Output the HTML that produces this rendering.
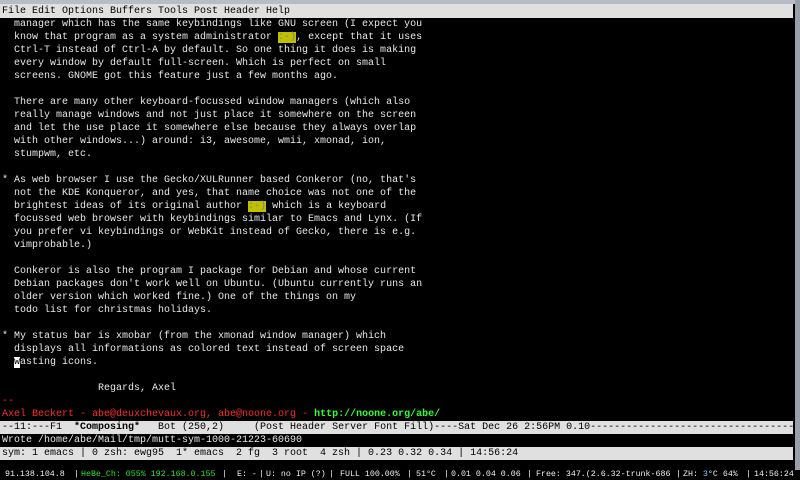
<!DOCTYPE html>
<html><head><meta charset="utf-8"><style>
html,body{margin:0;padding:0;}
body{width:800px;height:480px;background:#000;position:relative;overflow:hidden;font-family:"Liberation Mono",monospace;}
#top{position:absolute;left:0;top:0;width:800px;height:4px;background:#b8bcc4;}
#right{position:absolute;left:795px;top:0;width:5px;height:470px;background:#9a9ea6;}
.row{position:absolute;left:2px;height:13px;line-height:13px;font-size:10px;white-space:pre;color:#e8e8e8;}
#menu{position:absolute;left:0;top:4px;width:793px;height:14px;background:#e0e0e0;}
#menu .row{color:#000;top:1px;}
.hl{background:#c0c000;color:#808080;}
.cur{background:#fff;color:#000;}
.red{color:#ff2a2a;}
.grn{color:#30ff30;font-weight:bold;}
.bar{position:absolute;left:0;width:793px;height:13px;background:#e0e0e0;overflow:hidden;}
#xm{position:absolute;left:0;top:470px;width:800px;height:10px;background:#000;}
#xm span{position:absolute;top:0;line-height:10px;font-size:8.3px;color:#eee;white-space:pre;}
#xm .g{color:#30e030;}
</style></head><body>
<div id="top"></div>
<div id="right"></div>
<div id="menu"><div class="row">File Edit Options Buffers Tools Post Header Help</div></div>
<div class="row" style="top:18px">  manager which has the same keybindings like GNU screen (I expect you</div>
<div class="row" style="top:31px">  know that program as a system administrator <span class="hl">:-)</span>, except that it uses</div>
<div class="row" style="top:44px">  Ctrl-T instead of Ctrl-A by default. So one thing it does is making</div>
<div class="row" style="top:57px">  every window by default full-screen. Which is perfect on small</div>
<div class="row" style="top:70px">  screens. GNOME got this feature just a few months ago.</div>
<div class="row" style="top:96px">  There are many other keyboard-focussed window managers (which also</div>
<div class="row" style="top:109px">  really manage windows and not just place it somewhere on the screen</div>
<div class="row" style="top:122px">  and let the use place it somewhere else because they always overlap</div>
<div class="row" style="top:135px">  with other windows...) around: i3, awesome, wmii, xmonad, ion,</div>
<div class="row" style="top:148px">  stumpwm, etc.</div>
<div class="row" style="top:174px">* As web browser I use the Gecko/XULRunner based Conkeror (no, that's</div>
<div class="row" style="top:187px">  not the KDE Konqueror, and yes, that name choice was not one of the</div>
<div class="row" style="top:200px">  brightest ideas of its original author <span class="hl">:-)</span> which is a keyboard</div>
<div class="row" style="top:213px">  focussed web browser with keybindings similar to Emacs and Lynx. (If</div>
<div class="row" style="top:226px">  you prefer vi keybindings or WebKit instead of Gecko, there is e.g.</div>
<div class="row" style="top:239px">  vimprobable.)</div>
<div class="row" style="top:265px">  Conkeror is also the program I package for Debian and whose current</div>
<div class="row" style="top:278px">  Debian packages don't work well on Ubuntu. (Ubuntu currently runs an</div>
<div class="row" style="top:291px">  older version which worked fine.) One of the things on my</div>
<div class="row" style="top:304px">  todo list for christmas holidays.</div>
<div class="row" style="top:330px">* My status bar is xmobar (from the xmonad window manager) which</div>
<div class="row" style="top:343px">  displays all informations as colored text instead of screen space</div>
<div class="row" style="top:356px">  <span class="cur">w</span>asting icons.</div>
<div class="row" style="top:382px">                Regards, Axel</div>
<div class="row red" style="top:395px">-- </div>
<div class="row" style="top:408px"><span class="red">Axel Beckert - abe@deuxchevaux.org, abe@noone.org - </span><span class="grn">http://noone.org/abe/</span></div>
<div class="bar" style="top:421px"><div class="row" style="top:0;color:#000">--11:---F1  <b>*Composing*</b>   Bot (250,2)     (Post Header Server Font Fill)----Sat Dec 26 2:56PM 0.10----------------------------------</div></div>
<div class="row" style="top:434px">Wrote /home/abe/Mail/tmp/mutt-sym-1000-21223-60690</div>
<div class="bar" style="top:447px"><div class="row" style="top:0;color:#000">sym: 1 emacs | 0 zsh: ewg95  1* emacs  2 fg  3 root  4 zsh | 0.23 0.32 0.34 | 14:56:24</div></div>
<div id="xm">
<span style="left:5px">91.138.104.8</span>
<span style="left:74px">|</span>
<span class="g" style="left:81px">HeBe_Ch: 055% 192.168.0.155</span>
<span style="left:222px">|</span>
<span style="left:237px">E: -</span>
<span style="left:259px">|</span>
<span style="left:266px">U: no IP (?)</span>
<span style="left:329px">|</span>
<span style="left:340px">FULL 100.00%</span>
<span style="left:407px">|</span>
<span style="left:416px">51°C</span>
<span style="left:444px">|</span>
<span style="left:451px">0.01 0.04 0.06</span>
<span style="left:527px">|</span>
<span style="left:536px">Free: 347.(2.6.32-trunk-686</span>
<span style="left:676px">|</span>
<span style="left:683px">ZH: <span style="position:static;color:#8cf">3</span>°C 64%</span>
<span style="left:746px">|</span>
<span style="left:754px">14:56:24</span>
</div>
</body></html>
